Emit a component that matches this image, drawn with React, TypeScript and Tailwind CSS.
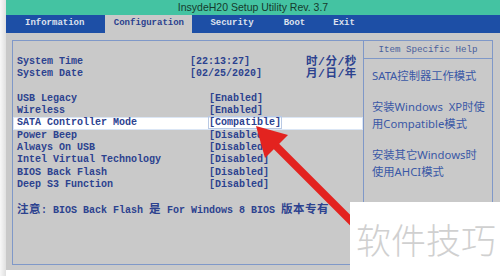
const mono = { fontFamily: '"Liberation Mono", "Noto Sans CJK SC", monospace' };

const tabs = [
  { name: 'Information', cls: 'ml-[19px]', active: false },
  { name: 'Configuration', cls: 'ml-[21px] w-[87px] justify-center', active: true },
  { name: 'Security', cls: 'ml-[18px]', active: false },
  { name: 'Boot', cls: 'ml-[30px]', active: false },
  { name: 'Exit', cls: 'ml-[28px]', active: false },
];

type Row = { label?: string; value?: string; unit?: string; indent?: boolean; hl?: boolean };

const rows: Row[] = [
  { label: 'System Time', value: '[22:13:27]', unit: '时/分/秒' },
  { label: 'System Date', value: '[02/25/2020]', unit: '月/日/年' },
  {},
  { label: 'USB Legacy', value: '[Enabled]', indent: true },
  { label: 'Wireless', value: '[Enabled]', indent: true },
  { label: 'SATA Controller Mode', value: '[Compatible]', indent: true, hl: true },
  { label: 'Power Beep', value: '[Disabled]', indent: true },
  { label: 'Always On USB', value: '[Disabled]', indent: true },
  { label: 'Intel Virtual Technology', value: '[Disabled]', indent: true },
  { label: 'BIOS Back Flash', value: '[Disabled]', indent: true },
  { label: 'Deep S3 Function', value: '[Disabled]', indent: true },
  {},
];

function Cjk({ children }: { children: string }) {
  return <span className="text-[11.5px] tracking-[0.5px]">{children}</span>;
}

export default function App() {
  return (
    <div className="w-[500px] h-[276px] relative overflow-hidden bg-white flex">
      <div className="w-[6px] bg-gradient-to-r from-[#f8f8f8] to-[#e0e0e0]" />

      <div className="flex-1 flex flex-col">
        {/* title bar */}
        <div
          className="h-[15px] bg-[#44c3a2] flex items-center justify-center text-[10.5px] text-[#163a2c]"
          style={{ fontFamily: '"Liberation Sans", Arial, sans-serif' }}
        >
          InsydeH20 Setup Utility Rev. 3.7
        </div>

        {/* tabs */}
        <div className="h-[18px] bg-[#1d4fa6] flex items-stretch text-[9px] font-bold" style={mono}>
          {tabs.map((t) => (
            <div
              key={t.name}
              className={`flex items-center ${t.cls} ${t.active ? 'bg-[#c9c9c9] text-[#2b418e]' : 'text-[#dde2ee]'}`}
            >
              {t.name}
            </div>
          ))}
        </div>

        {/* body */}
        <div className="flex-1 bg-[#c9c9c9] pl-[6px] pr-[7px] pt-[7px] pb-[5px]">
          <div className="h-full border border-[#7f98c8] flex">
            <div className="w-[350px] pt-[15px] text-[10px] font-bold text-[#2c428f]" style={mono}>
              {rows.map((r, i) =>
                r.label ? (
                  <div
                    key={i}
                    className={`h-[12.3px] leading-[12.3px] flex pl-[4px] ${r.hl ? 'bg-white shadow-[inset_0_0_0_1px_#dbe6f5]' : ''}`}
                  >
                    <span className="w-[173px] shrink-0">{r.label}</span>
                    <span className={`w-[116px] shrink-0 ${r.indent ? 'pl-[19px]' : ''}`}>
                      <span className={r.hl ? 'outline outline-1 outline-[#b9c9e4]' : ''}>{r.value}</span>
                    </span>
                    {r.unit && <Cjk>{r.unit}</Cjk>}
                  </div>
                ) : (
                  <div key={i} className="h-[12.3px]" />
                )
              )}
              <div className="h-[12.3px] leading-[12.3px] pl-[4px] whitespace-nowrap">
                <Cjk>注意</Cjk>: BIOS Back Flash <Cjk>是</Cjk> For Windows 8 BIOS <Cjk>版本专有</Cjk>
              </div>
            </div>

            {/* help panel */}
            <div className="flex-1 border-l border-[#7f98c8] flex flex-col">
              <div
                className="h-[18px] border-b border-[#7f98c8] flex items-center justify-center text-[9.2px] text-[#4a5f9c]"
                style={mono}
              >
                Item Specific Help
              </div>
              <div
                className="pl-[8px] pt-[8px] text-[11.3px] leading-[17px] text-[#3a58a6] flex flex-col gap-[14px]"
                style={{ fontFamily: '"Noto Sans", "Noto Sans CJK SC", sans-serif' }}
              >
                <p>SATA控制器工作模式</p>
                <p>
                  安装Windows&nbsp; XP时使
                  <br />
                  用Compatible模式
                </p>
                <p>
                  安装其它Windows时
                  <br />
                  使用AHCI模式
                </p>
              </div>
            </div>
          </div>
        </div>
        <div className="h-[6px] bg-white" />
      </div>

      {/* red arrow */}
      <svg className="absolute inset-0 pointer-events-none" width="500" height="276" viewBox="0 0 500 276">
        <line x1="274" y1="144" x2="380" y2="250" stroke="#e3231f" strokeWidth="7.5" />
        <polygon points="256,126 288,135 265,158" fill="#e3231f" />
      </svg>

      {/* watermark */}
      <div className="absolute left-[350px] top-[202px] right-0 bottom-0 bg-white pl-[6px] pt-[19px]">
        <span
          className="text-[35px] leading-none text-[#d0d0d0]"
          style={{ fontFamily: '"Noto Sans CJK SC", sans-serif', fontWeight: 300 }}
        >
          软件技巧
        </span>
      </div>
    </div>
  );
}
